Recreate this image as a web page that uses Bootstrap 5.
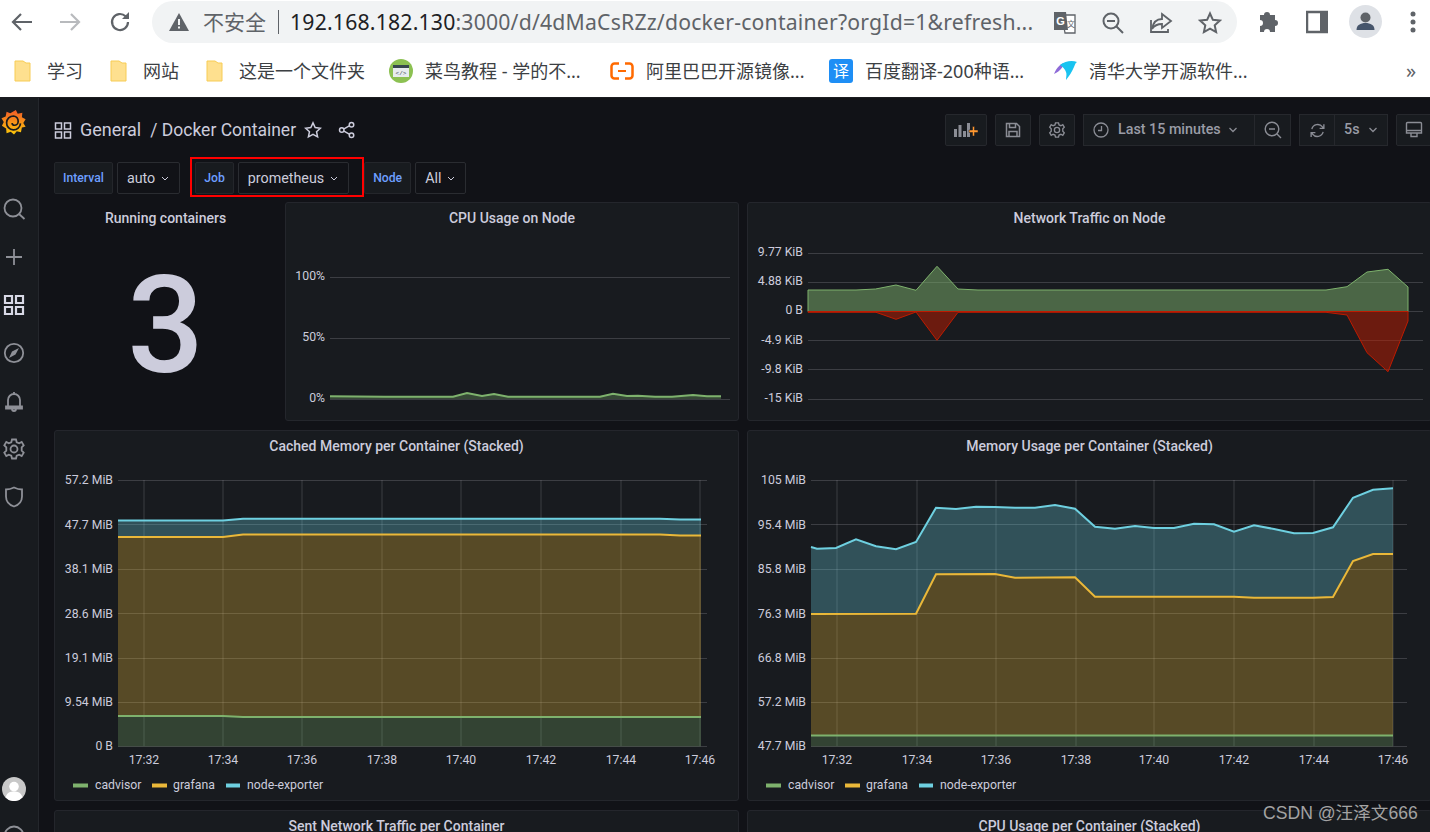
<!DOCTYPE html>
<html lang="zh">
<head>
<meta charset="utf-8">
<title>Docker Container</title>
<link href="https://cdn.jsdelivr.net/npm/bootstrap@5.3.0/dist/css/bootstrap.min.css" rel="stylesheet">
<style>
html,body{height:832px;overflow:hidden;background:#111217;margin:0}
body{font-family:Roboto,"Noto Sans CJK SC",sans-serif;color:#ccccdc;width:1430px}
.cjk{font-family:"Noto Sans","Noto Sans CJK SC",sans-serif}
.chrome-wrap{height:98px;background:#fff;border-bottom:1px solid #1b1c20}
.tab-row{height:44px;padding-top:1px}
.omni{position:relative;width:1085px;height:42px;margin-left:152px;background:#f1f3f4;border-radius:21px;padding-left:16px}
.nav-ico{position:absolute;top:10px}
.chrome-ico{position:absolute;top:10px}
.warn-txt{font-size:21px;color:#5f6368;margin-left:35px;white-space:nowrap;line-height:42px}
.omni-sep{width:1px;height:24px;background:#5f6368;margin:0 11px 0 12px}
.url-txt{font-size:21.2px;color:#5f6368;white-space:nowrap;line-height:42px;font-family:"Noto Sans",sans-serif;letter-spacing:.2px}
.url-txt b{font-weight:400;color:#202124}
.mark-row{height:53px;padding-left:14px;position:relative}
.mark-item{position:absolute;top:3px;height:48px;display:flex;align-items:center;font-size:18px;color:#3c4043;white-space:nowrap}
.mark-item svg{margin-right:16px;flex:none}
.shell{height:734px}
.side{width:39px;background:#181b1f;border-right:1px solid #24272c;flex:none;padding:10px 0 0 2px}
.side-ico{height:48px;flex:none}
.side-logo{height:28px;margin-bottom:60px;flex:none;margin-left:-1px}
.side-low{margin-top:auto}
.avatar-wrap{height:25px;margin-bottom:22px;flex:none}
.help-wrap{height:9px;flex:none}
.main-col{flex:1;min-width:0;padding:16px 0 0 15px}
.bar-row{height:32px}
.bar-title{font-size:18px;color:#ccccdc;line-height:32px;white-space:nowrap}
.bar-sub{font-size:17.5px}
.tool-btn{height:32px;background:#181b1f;border:1px solid #26282d;border-radius:2px;color:#9a9ca6;font-size:14.3px;font-weight:500;display:flex;align-items:center;justify-content:center;white-space:nowrap;padding:0}
.tool-join{border-radius:0}
.w-36{width:36px}.w-42{width:42px}
.time-btn{width:172px;padding-left:9px;justify-content:flex-start}
.rate-btn{width:53px;border-left:0;justify-content:flex-start;padding-left:9px}
.var-row{height:32px;margin-top:16px}
.var-lab{height:32px;padding:0 8px;background:#181b1f;border:1px solid #24262b;border-radius:2px;color:#6e9fff;font-size:12.2px;font-weight:500;display:flex;align-items:center}
.var-val{height:32px;padding:1px 10px 0 9px;background:#111217;border:1px solid #2a2c31;border-radius:2px;color:#ccccdc;font-size:14.3px;display:flex;align-items:center;gap:6px;white-space:nowrap}
.job-box{margin:-5px 0 -3px 10px;padding:3px 13px 1px 3px;border:2px solid #f00;display:flex;gap:4px}
.dash-grid{display:grid;grid-template-columns:223px 454px 685px;grid-template-rows:219px 371px 60px;column-gap:8px;row-gap:9px;margin-top:8px;width:1378px}
.pane{background:#181b1f;border:1px solid #24262c;border-radius:3px;overflow:hidden;min-width:0}
.pane-wide{grid-column:span 2}
.pane-bare{background:transparent;border-color:transparent}
.pane-head{height:31px;line-height:30px;font-size:14px;font-weight:500;text-align:center;color:#ccccdc;white-space:nowrap}
.big-stat{font-size:135px;font-weight:500;line-height:1;color:#ccccdc;text-align:center;margin-top:25px}
.plot{display:block}
.plot text{font-family:Roboto,sans-serif;font-size:12.25px;fill:#ccccdc}
.ya{text-anchor:end}
.xa{text-anchor:middle}
.gl{stroke:#cccdd8;stroke-opacity:.2;fill:none}
.wm{position:absolute;left:1263px;top:800px;font-size:17.6px;color:#a3a3a3;white-space:nowrap;font-family:"Liberation Sans","Noto Sans CJK SC",sans-serif}
</style>
</head>
<body>
<div class="chrome-wrap">
  <div class="tab-row position-relative">
    <svg class="nav-ico" style="left:10px" width="24" height="24" viewBox="0 0 24 24" fill="none" stroke="#5f6368" stroke-width="2.2"><path d="M22 12H3M11 4l-8 8 8 8"/></svg>
    <svg class="nav-ico" style="left:58px" width="24" height="24" viewBox="0 0 24 24" fill="none" stroke="#b8babd" stroke-width="2.2"><path d="M2 12h19M13 4l8 8-8 8"/></svg>
    <svg class="nav-ico" style="left:108px" width="24" height="24" viewBox="0 0 24 24" fill="none" stroke="#5f6368" stroke-width="2.2"><path d="M20 12a8 8 0 1 1-2.400-5.700"/><path d="M21 2v7h-7" fill="#5f6368" stroke="none"/></svg>
    <div class="omni d-flex align-items-center">
      <svg class="position-absolute" style="left:17px;top:12px" width="20" height="18" viewBox="0 0 20 18"><path d="M10 0l10 18H0z" fill="#5f6368"/><path d="M9 6h2v6H9zM9 13.500h2v2H9z" fill="#f1f3f4"/></svg>
      <span class="warn-txt cjk">不安全</span><span class="omni-sep"></span><span class="url-txt"><b>192.168.182.130</b>:3000/d/4dMaCsRZz/docker-container?orgId=1&amp;refresh...</span>
      <svg class="chrome-ico" style="left:901px;top:11px" width="24" height="24" viewBox="0 0 24 24"><path d="M9 3h13v18H12z" fill="#fff" stroke="#5f6368" stroke-width="1.300"/><path d="M1 0h12l2 18H1z" fill="#5f6368"/><text x="7.500" y="13" text-anchor="middle" font-size="11" font-weight="700" fill="#fff" font-family="Liberation Sans">G</text><text x="18" y="15" text-anchor="middle" font-size="8" fill="#5f6368" font-family="Noto Sans CJK SC">文</text></svg>
      <svg class="chrome-ico" style="left:949px" width="24" height="24" viewBox="0 0 24 24" fill="none" stroke="#5f6368" stroke-width="2"><circle cx="10" cy="10" r="7.500"/><path d="M6 10h8M15.500 15.500L22 22"/></svg>
      <svg class="chrome-ico" style="left:997px" width="24" height="24" viewBox="0 0 24 24" fill="none" stroke="#5f6368" stroke-width="1.800"><path d="M13 3l9 7-9 7v-4c-5 0-8 2-10 5 1-6 4-10 10-10z"/><path d="M2 9v12h17v-3"/></svg>
      <svg class="chrome-ico" style="left:1046px" width="24" height="24" viewBox="0 0 24 24" fill="none" stroke="#5f6368" stroke-width="2"><path d="M12 2.500l2.900 6.300 6.900.8-5.100 4.700 1.400 6.800-6.100-3.400-6.100 3.400 1.400-6.800-5.100-4.700 6.900-.8z"/></svg>
    </div>
    <svg class="chrome-ico" style="left:1258px" width="24" height="24" viewBox="0 0 24 24" fill="#5f6368"><path d="M9 2a3 3 0 0 1 3 3h5v5a3 3 0 1 1 0 6v6h-5a3 3 0 1 0-6 0H2v-6a3 3 0 1 0 0-6V5h4a3 3 0 0 1 3-3z"/></svg>
    <svg class="chrome-ico" style="left:1306px" width="22" height="24" viewBox="0 0 22 24"><path d="M1 2h20v20H1z" fill="none" stroke="#5f6368" stroke-width="2.500"/><path d="M14 2h7v20h-7z" fill="#5f6368"/></svg>
    <svg class="chrome-ico" style="left:1349px;top:5px" width="33" height="33" viewBox="0 0 33 33"><circle cx="16.500" cy="16.500" r="16.500" fill="#dee1e6"/><circle cx="16.500" cy="12.500" r="5" fill="#5f6368"/><path d="M7.500 25c0-5 4-7 9-7s9 2 9 7z" fill="#46556b"/></svg>
    <svg class="chrome-ico" style="left:1409px" width="8" height="24" viewBox="0 0 8 24" fill="#5f6368"><circle cx="4" cy="4" r="2.500"/><circle cx="4" cy="12" r="2.500"/><circle cx="4" cy="20" r="2.500"/></svg>
  </div>
  <div class="mark-row cjk">
    <div class="mark-item" style="left:14px"><svg width="17" height="22" viewBox="0 0 17 22"><path d="M1 1h8l3 2h4v18H1z" fill="#fee08f" stroke="#f7cc55"/></svg>学习</div>
    <div class="mark-item" style="left:110px"><svg width="17" height="22" viewBox="0 0 17 22"><path d="M1 1h8l3 2h4v18H1z" fill="#fee08f" stroke="#f7cc55"/></svg>网站</div>
    <div class="mark-item" style="left:206px"><svg width="17" height="22" viewBox="0 0 17 22"><path d="M1 1h8l3 2h4v18H1z" fill="#fee08f" stroke="#f7cc55"/></svg>这是一个文件夹</div>
    <div class="mark-item" style="left:389px"><svg style="margin-right:12px" width="24" height="24" viewBox="0 0 24 24"><circle cx="12" cy="12" r="12" fill="#8cc152"/><path d="M4 6h16v12H4z" fill="#e8ecef"/><path d="M4 6h16v3H4z" fill="#37474f"/><text x="12" y="16" text-anchor="middle" font-size="6" fill="#37474f" font-family="Liberation Mono">&lt;/&gt;</text></svg>菜鸟教程 - 学的不...</div>
    <div class="mark-item" style="left:610px"><svg style="margin-right:12px" width="24" height="18" viewBox="0 0 24 18"><path d="M9 1.500H4.500a3 3 0 0 0-3 3v9a3 3 0 0 0 3 3H9M15 1.500h4.500a3 3 0 0 1 3 3v9a3 3 0 0 1-3 3H15" fill="none" stroke="#ff6a00" stroke-width="2.500"/><path d="M8 8h8v2H8z" fill="#ff6a00"/></svg>阿里巴巴开源镜像...</div>
    <div class="mark-item" style="left:829px"><svg style="margin-right:12px" width="24" height="24" viewBox="0 0 24 24"><rect width="24" height="24" rx="3" fill="#1e8ef5"/><text x="12" y="18" text-anchor="middle" font-size="16" fill="#fff" font-family="Noto Sans CJK SC">译</text></svg>百度翻译-200种语...</div>
    <div class="mark-item" style="left:1053px"><svg style="margin-right:12px" width="24" height="24" viewBox="0 0 24 24"><path d="M1 15C4 8 8 4 12 4c-2 3-4 8-11 11z" fill="#8e6bd8"/><path d="M7 6c5-4 12-5 17-3-2 1-2 3-3 5-2 5-5 9-8 13 0-3 1-6 0-8-1-3-3-5-6-7z" fill="#19c3f0"/></svg>清华大学开源软件...</div>
    <div class="mark-item" style="left:1406px;color:#5f6368;font-size:20px">»</div>
  </div>
</div>

<div class="shell d-flex">
  <nav class="side d-flex flex-column align-items-start">
    <div class="side-logo">
      <svg width="26" height="28" viewBox="0 0 28 28"><defs><linearGradient id="gf" x1="0" y1="1" x2="0" y2="0"><stop offset="0" stop-color="#fbca0a"/><stop offset="1" stop-color="#f05a28"/></linearGradient></defs><path d="M16 1l2 4 5-1-.500 5 4 2-2.500 4 2.500 4-4 1-1 5-4.500-1-3 3.500-3.500-3-4.500 1.500-.500-5L1 18l2-4-2.500-4L5 8l1-5 4 1.500z" fill="url(#gf)"/><path d="M21 15.500a7.500 7.500 0 1 1-7.500-8 6 6 0 0 1 5 6 4 4 0 0 1-4 4 2.500 2.500 0 0 1-2.500-2.500" fill="none" stroke="#181b1f" stroke-width="1.800"/></svg>
    </div>
    <div class="side-ico"><svg width="24" height="24" viewBox="0 0 24 24" fill="none" stroke="#8e9097" stroke-width="1.800"><circle cx="11" cy="11" r="8.500"/><path d="M17 17l5.500 5"/></svg></div>
    <div class="side-ico"><svg width="24" height="24" viewBox="0 0 24 24" fill="none" stroke="#8e9097" stroke-width="1.800"><path d="M12 4v16M4 12h16"/></svg></div>
    <div class="side-ico"><svg width="24" height="24" viewBox="0 0 24 24" fill="none" stroke="#d8d9e6" stroke-width="2.200"><path d="M3 3h7v7H3zM14 3h7v7h-7zM3 14h7v7H3zM14 14h7v7h-7z"/></svg></div>
    <div class="side-ico"><svg width="24" height="24" viewBox="0 0 24 24" fill="none" stroke="#8e9097" stroke-width="1.800"><circle cx="12" cy="12" r="9.200"/><path d="M17 7l-7 3.500L7 17l6.500-3.500z" fill="#8e9097" stroke="none"/></svg></div>
    <div class="side-ico"><svg width="24" height="24" viewBox="0 0 24 24" fill="none" stroke="#8e9097" stroke-width="1.800"><path d="M6 17v-6a6 6 0 0 1 12 0v6M4 17.500h16v2H4zM12 3v2M10 20a2 2 0 0 0 4 0"/></svg></div>
    <div class="side-ico"><svg width="24" height="24" viewBox="0 0 24 24" fill="none" stroke="#8e9097" stroke-width="1.800"><circle cx="12" cy="12" r="3.500"/><path d="M10 2.500h4l.700 2.800 2.500 1 2.500-1.400 2 3.400-2 2v3.400l2 2-2 3.400-2.500-1.400-2.500 1L14 21.500h-4l-.700-2.800-2.500-1-2.500 1.400-2-3.400 2-2v-3.400l-2-2 2-3.400 2.500 1.400 2.500-1z"/></svg></div>
    <div class="side-ico"><svg width="24" height="24" viewBox="0 0 24 24" fill="none" stroke="#8e9097" stroke-width="1.800"><path d="M12 2.500c3 1.500 5.500 2 8 2v7c0 5-3.500 8.500-8 10-4.500-1.500-8-5-8-10v-7c2.500 0 5-.5 8-2z"/></svg></div>
    <div class="side-low avatar-wrap"><svg width="24" height="24" viewBox="0 0 25 25"><circle cx="12.500" cy="12.500" r="12.500" fill="#c8c8c8"/><circle cx="12.500" cy="10" r="5" fill="#fff"/><path d="M3.500 21c2-5 5-6 9-6s7 1 9 6a12 12 0 0 1-18 0z" fill="#fff"/></svg></div>
    <div class="help-wrap"><svg width="24" height="24" viewBox="0 0 24 24" fill="none" stroke="#8e9097" stroke-width="1.800"><circle cx="12" cy="12" r="9.500"/></svg></div>
  </nav>

  <main class="main-col">
    <div class="bar-row d-flex align-items-center">
      <svg class="flex-none" width="18" height="18" viewBox="0 0 18 18" fill="none" stroke="#ccccdc" stroke-width="1.500"><path d="M1.500 2h6v6h-6zM10.500 2h6v6h-6zM1.500 11h6v6h-6zM10.500 11h6v6h-6z"/></svg>
      <span class="bar-title ms-2">General</span><span class="bar-title bar-sub" style="margin-left:9px">/ Docker Container</span>
      <svg class="flex-none" style="margin-left:8px" width="18" height="18" viewBox="0 0 24 24" fill="none" stroke="#ccccdc" stroke-width="2"><path d="M12 2.500l2.900 6.300 6.900.8-5.100 4.700 1.400 6.800-6.100-3.400-6.100 3.400 1.400-6.800-5.100-4.700 6.900-.8z"/></svg>
      <svg class="flex-none" style="margin-left:16px" width="18" height="18" viewBox="0 0 24 24" fill="none" stroke="#ccccdc" stroke-width="2"><circle cx="18" cy="5" r="3"/><circle cx="5" cy="12" r="3"/><circle cx="18" cy="19" r="3"/><path d="M8 10.500l7-4M8 13.500l7 4"/></svg>
      <div class="d-flex gap-2 ms-auto" style="margin-right:-2px">
        <div class="tool-btn w-42"><svg width="24" height="14" viewBox="0 0 24 14"><path d="M0 6h3v8H0zM4.500 2h3v12h-3zM9 8h3v6H9zM13 0h3v14h-3z" fill="#8b8d95"/><path d="M15 7h3.500V3.500h2V7H24v2.500h-3.500V13h-2V9.500H15z" fill="#ff9830" stroke="#181b1f" stroke-width=".5"/></svg></div>
        <div class="tool-btn w-36"><svg width="16" height="16" viewBox="0 0 16 16" fill="none" stroke="#8b8d95" stroke-width="1.500"><path d="M1.500 1.500h10l3 3v10h-13zM4.500 1.500v4h6v-4M4 14.500v-5h8v5"/></svg></div>
        <div class="tool-btn w-36"><svg width="18" height="18" viewBox="0 0 24 24" fill="none" stroke="#8b8d95" stroke-width="1.800"><circle cx="12" cy="12" r="3.500"/><path d="M10 2.500h4l.700 2.800 2.500 1 2.500-1.400 2 3.400-2 2v3.400l2 2-2 3.400-2.500-1.400-2.500 1L14 21.500h-4l-.700-2.800-2.500-1-2.500 1.400-2-3.400 2-2v-3.400l-2-2 2-3.400 2.500 1.400 2.500-1z"/></svg></div>
        <div class="d-flex">
          <div class="tool-btn tool-join time-btn"><svg style="margin-right:9px" width="16" height="16" viewBox="0 0 16 16" fill="none" stroke="#8b8d95" stroke-width="1.300"><circle cx="8" cy="8" r="7"/><path d="M8.500 4v4.500H5"/></svg>Last 15 minutes<svg class="ms-auto" style="margin-right:16px" width="10" height="6" viewBox="0 0 10 6" fill="none" stroke="#8b8d95" stroke-width="1.300"><path d="M1.500 1L5 4.500 8.500 1"/></svg></div>
          <div class="tool-btn tool-join w-36" style="border-left:0"><svg width="18" height="18" viewBox="0 0 18 18" fill="none" stroke="#8b8d95" stroke-width="1.400"><circle cx="8" cy="8" r="6.800"/><path d="M5 8h6M13 13l4 4"/></svg></div>
        </div>
        <div class="d-flex">
          <div class="tool-btn tool-join" style="width:36px"><svg width="17" height="17" viewBox="0 0 24 24" fill="none" stroke="#8b8d95" stroke-width="1.900"><path d="M4 10a8.500 8.500 0 0 1 15-3l2 2M20 14a8.500 8.500 0 0 1-15 3l-2-2M21 3v6h-6M3 21v-6h6"/></svg></div>
          <div class="tool-btn tool-join rate-btn">5s<svg style="margin-left:9px" width="10" height="6" viewBox="0 0 10 6" fill="none" stroke="#8b8d95" stroke-width="1.300"><path d="M1.500 1L5 4.500 8.500 1"/></svg></div>
        </div>
        <div class="tool-btn w-36"><svg width="18" height="18" viewBox="0 0 18 18" fill="none" stroke="#8b8d95" stroke-width="1.400"><path d="M2.500 1.500h13a1 1 0 0 1 1 1v9.500h-15V2.500a1 1 0 0 1 1-1zM1.500 9.500h15M6 12v3.500h6V12"/></svg></div>
      </div>
    </div>

    <div class="var-row d-flex">
      <div class="var-lab">Interval</div>
      <div class="var-val" style="margin-left:4px">auto<svg width="8" height="5" viewBox="0 0 8 5" fill="none" stroke="#ccccdc"><path d="M1 1l3 3 3-3"/></svg></div>
      <div class="job-box"><div class="var-lab">Job</div><div class="var-val">prometheus<svg width="8" height="5" viewBox="0 0 8 5" fill="none" stroke="#ccccdc"><path d="M1 1l3 3 3-3"/></svg></div></div>
      <div class="var-lab">Node</div>
      <div class="var-val" style="margin-left:4px">All<svg width="8" height="5" viewBox="0 0 8 5" fill="none" stroke="#ccccdc"><path d="M1 1l3 3 3-3"/></svg></div>
    </div>

    <div class="dash-grid">
      <section class="pane pane-bare"><div class="pane-head">Running containers</div><div class="big-stat">3</div></section>

      <section class="pane"><div class="pane-head">CPU Usage on Node</div>
        <svg class="plot" width="452" height="187" viewBox="286 233 452 187">
          <path class="gl" d="M330 276.500H730M330 337.500H730M330 398.500H730"/>
          <text class="ya" x="325" y="279">100%</text><text class="ya" x="325" y="340">50%</text><text class="ya" x="325" y="401">0%</text>
          <path d="M330 395.300L385 395.700 453 395.700 467 392 482 395 494 393 508 395.700 600 395.700 613 392.700 627 395 638 394.700 655 395.700 672 395.700 693 394 707 395.300 721 395.300V398H330z" fill="#7eb26d" fill-opacity=".3"/>
          <path d="M330 395.300L385 395.700 453 395.700 467 392 482 395 494 393 508 395.700 600 395.700 613 392.700 627 395 638 394.700 655 395.700 672 395.700 693 394 707 395.300 721 395.300" fill="none" stroke="#7eb26d" stroke-width="2"/>
        </svg></section>

      <section class="pane"><div class="pane-head">Network Traffic on Node</div>
        <svg class="plot" width="683" height="187" viewBox="748 233 683 187">
          <path class="gl" d="M808 252.500H1423M808 281.500H1423M808 310.500H1423M808 339.500H1423M808 368.500H1423M808 398.500H1423"/>
          <text class="ya" x="803" y="255">9.77 KiB</text><text class="ya" x="803" y="284">4.88 KiB</text><text class="ya" x="803" y="313">0 B</text><text class="ya" x="803" y="343">-4.9 KiB</text><text class="ya" x="803" y="372">-9.8 KiB</text><text class="ya" x="803" y="401">-15 KiB</text>
          <path d="M808 289L856 289 875.500 288 896 284 916 289.300 937 265.300 958 288 978 289 1326 289 1347 285.700 1367 271 1388 268.300 1408 286V310.500H808z" fill="#7eb26d" fill-opacity=".5" stroke="#7eb26d"/>
          <path d="M808 311.300L876 311.300 896 318.300 916 311 937 339.300 958 311.300 1326 311.300 1347 314 1367 351.700 1388 370.700 1408 320V310.500H808z" fill="#bf1b00" fill-opacity=".5" stroke="#bf1b00" stroke-width="1"/>
        </svg></section>

      <section class="pane pane-wide"><div class="pane-head">Cached Memory per Container (Stacked)</div>
        <svg class="plot" width="683" height="339" viewBox="55 461 683 339">
          <path class="gl" d="M118 479.500H707M118 523.500H707M118 568.500H707M118 612.500H707M118 657.500H707M118 701.500H707M118 745.500H707M144 479V745M223 479V745M302 479V745M382 479V745M461 479V745M541 479V745M621 479V745M700 479V745"/>
          <text class="ya" x="113" y="483">57.2 MiB</text><text class="ya" x="113" y="527.500">47.7 MiB</text><text class="ya" x="113" y="572">38.1 MiB</text><text class="ya" x="113" y="616.500">28.6 MiB</text><text class="ya" x="113" y="660.500">19.1 MiB</text><text class="ya" x="113" y="705">9.54 MiB</text><text class="ya" x="113" y="749">0 B</text>
          <text class="xa" x="144" y="763">17:32</text><text class="xa" x="223" y="763">17:34</text><text class="xa" x="302" y="763">17:36</text><text class="xa" x="382" y="763">17:38</text><text class="xa" x="461" y="763">17:40</text><text class="xa" x="541" y="763">17:42</text><text class="xa" x="621" y="763">17:44</text><text class="xa" x="700" y="763">17:46</text>
          <path d="M118 715L223 715 243 716H701V745.500H118z" fill="#7eb26d" fill-opacity=".27"/>
          <path d="M118 536L223 536 243 533.500H660L680 534.500H701V716H243L223 715H118z" fill="#eab839" fill-opacity=".3"/>
          <path d="M118 519.500L223 519.500 243 517.700H660L680 518.500H701V534.500H680L660 533.500H243L223 536H118z" fill="#6ed0e0" fill-opacity=".3"/>
          <path d="M118 715L223 715 243 716H701" fill="none" stroke="#7eb26d" stroke-width="2"/>
          <path d="M118 536L223 536 243 533.500H660L680 534.500H701" fill="none" stroke="#eab839" stroke-width="2"/>
          <path d="M118 519.500L223 519.500 243 517.700H660L680 518.500H701" fill="none" stroke="#6ed0e0" stroke-width="2"/>
          <path d="M73 784.500H88" stroke="#7eb26d" stroke-width="4"/><text x="95" y="787.500">cadvisor</text>
          <path d="M152 784.500H167" stroke="#eab839" stroke-width="4"/><text x="173" y="787.500">grafana</text>
          <path d="M226 784.500H240" stroke="#6ed0e0" stroke-width="4"/><text x="247" y="787.500">node-exporter</text>
        </svg></section>

      <section class="pane"><div class="pane-head">Memory Usage per Container (Stacked)</div>
        <svg class="plot" width="683" height="339" viewBox="748 461 683 339">
          <path class="gl" d="M811 479.500H1407M811 523.500H1407M811 568.500H1407M811 612.500H1407M811 657.500H1407M811 701.500H1407M811 745.500H1407M837 479V745M917 479V745M996 479V745M1076 479V745M1154 479V745M1234 479V745M1314 479V745M1393 479V745"/>
          <text class="ya" x="806" y="483">105 MiB</text><text class="ya" x="806" y="527.500">95.4 MiB</text><text class="ya" x="806" y="572">85.8 MiB</text><text class="ya" x="806" y="616.500">76.3 MiB</text><text class="ya" x="806" y="660.500">66.8 MiB</text><text class="ya" x="806" y="705">57.2 MiB</text><text class="ya" x="806" y="749">47.7 MiB</text>
          <text class="xa" x="837" y="763">17:32</text><text class="xa" x="917" y="763">17:34</text><text class="xa" x="996" y="763">17:36</text><text class="xa" x="1076" y="763">17:38</text><text class="xa" x="1154" y="763">17:40</text><text class="xa" x="1234" y="763">17:42</text><text class="xa" x="1314" y="763">17:44</text><text class="xa" x="1393" y="763">17:46</text>
          <path d="M811 734.500H1393V745.500H811z" fill="#7eb26d" fill-opacity=".27"/>
          <path d="M811 613L916 612.700 936 573.300 995 573 1015 576.700 1075 576.300 1095 595.700 1234 595.700 1254 596.700 1313 596.700 1333 596 1353 560 1373 553 1393 553V734.500H811z" fill="#eab839" fill-opacity=".3"/>
          <path d="M811 546L817 547.700 836 547 856 538.300 876 545.300 896 548.300 916 541 936 506.700 956 508 976 505.700 995 506 1015 506.700 1035 506.700 1055 504 1075 507.700 1095 525.700 1115 527.700 1135 525 1154 527 1174 527 1194 522.700 1214 523.300 1234 530.700 1254 524.300 1274 528 1294 532.300 1313 532 1333 526.300 1353 496.700 1373 488.700 1393 487.300V553L1373 553 1353 560 1333 596 1313 596.700 1254 596.700 1234 595.700 1095 595.700 1075 576.300 1015 576.700 995 573 936 573.300 916 612.700 811 613z" fill="#6ed0e0" fill-opacity=".3"/>
          <path d="M811 734.500H1393" fill="none" stroke="#7eb26d" stroke-width="2"/>
          <path d="M811 613L916 612.700 936 573.300 995 573 1015 576.700 1075 576.300 1095 595.700 1234 595.700 1254 596.700 1313 596.700 1333 596 1353 560 1373 553 1393 553" fill="none" stroke="#eab839" stroke-width="2"/>
          <path d="M811 546L817 547.700 836 547 856 538.300 876 545.300 896 548.300 916 541 936 506.700 956 508 976 505.700 995 506 1015 506.700 1035 506.700 1055 504 1075 507.700 1095 525.700 1115 527.700 1135 525 1154 527 1174 527 1194 522.700 1214 523.300 1234 530.700 1254 524.300 1274 528 1294 532.300 1313 532 1333 526.300 1353 496.700 1373 488.700 1393 487.300" fill="none" stroke="#6ed0e0" stroke-width="2"/>
          <path d="M766 784.500H781" stroke="#7eb26d" stroke-width="4"/><text x="788" y="787.500">cadvisor</text>
          <path d="M845 784.500H860" stroke="#eab839" stroke-width="4"/><text x="866" y="787.500">grafana</text>
          <path d="M919 784.500H933" stroke="#6ed0e0" stroke-width="4"/><text x="940" y="787.500">node-exporter</text>
        </svg></section>

      <section class="pane pane-wide"><div class="pane-head">Sent Network Traffic per Container</div></section>
      <section class="pane"><div class="pane-head">CPU Usage per Container (Stacked)</div></section>
    </div>
  </main>
</div>
<div class="wm">CSDN @汪泽文666</div>
</body>
</html>
